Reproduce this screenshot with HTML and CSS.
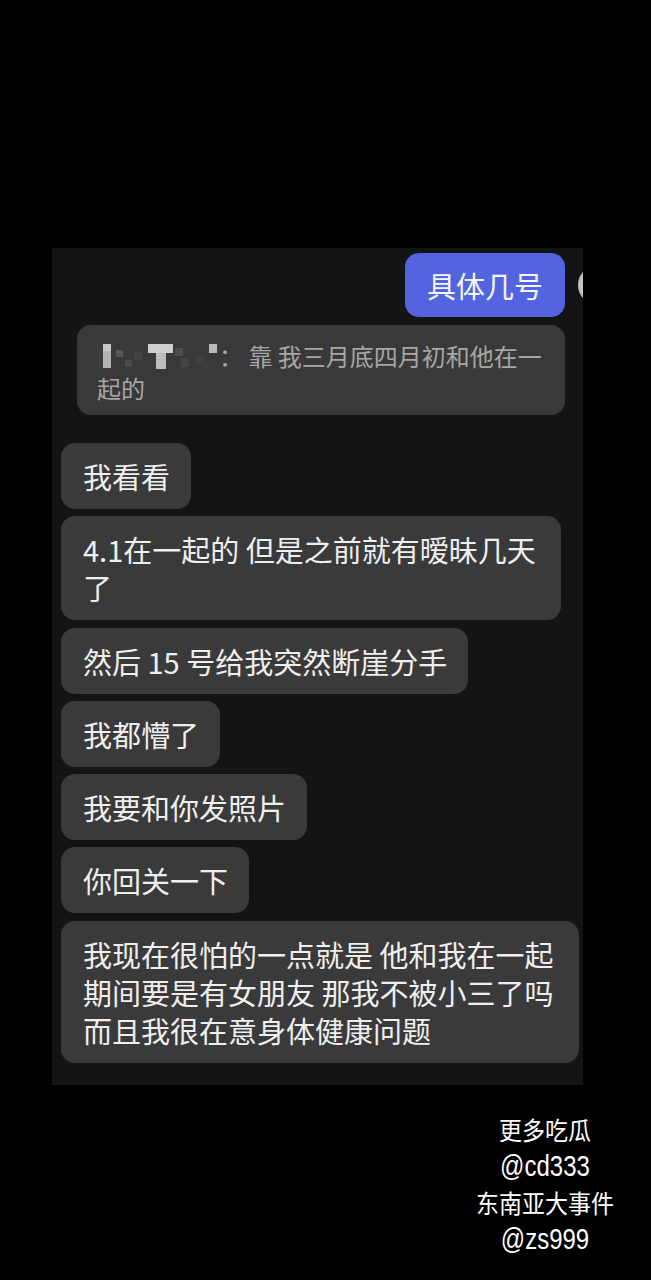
FILE: index.html
```html
<!DOCTYPE html>
<html lang="zh-CN">
<head>
  <meta charset="UTF-8" />
  <title>聊天记录</title>
  <link rel="stylesheet" href="styles.css">
</head>
<body>
  <div class="panel">
    <div class="out-row">
      <div class="bubble-out">具体几号</div>
      <div class="avatar"></div>
    </div>

    <div class="quote">
      <svg class="masked-name" width="122" height="30" viewBox="0 0 122 30">
        <rect x="0" y="4" width="5" height="22" fill="#3c3c3c" />
        <rect x="6" y="2" width="8" height="24" fill="#b4b4b4" />
        <rect x="6" y="2" width="8" height="7" fill="#c9c9c9" />
        <rect x="19" y="8" width="7" height="7" fill="#555" />
        <rect x="28" y="18" width="7" height="7" fill="#4a4a4a" />
        <rect x="37" y="10" width="8" height="8" fill="#444" />
        <rect x="51" y="2" width="25" height="9" fill="#cfcfcf" />
        <rect x="59" y="11" width="10" height="16" fill="#bdbdbd" />
        <rect x="78" y="6" width="8" height="8" fill="#4d4d4d" />
        <rect x="84" y="16" width="8" height="9" fill="#444" />
        <rect x="98" y="14" width="8" height="8" fill="#3f3f3f" />
        <rect x="112" y="2" width="8" height="9" fill="#b8b8b8" />
        <rect x="104" y="20" width="8" height="7" fill="#3d3d3d" />
      </svg><span class="colon">：</span> 靠 我三月底四月初和他在一<br>起的
    </div>

    <div class="msg-list">
      <div class="bubble">我看看</div>
      <div class="bubble bubble-two">4.1在一起的 但是之前就有暧昧几天<br>了</div>
      <div class="bubble">然后 15 号给我突然断崖分手</div>
      <div class="bubble">我都懵了</div>
      <div class="bubble">我要和你发照片</div>
      <div class="bubble">你回关一下</div>
      <div class="bubble bubble-three">我现在很怕的一点就是 他和我在一起<br>期间要是有女朋友 那我不被小三了吗<br>而且我很在意身体健康问题</div>
    </div>
  </div>

  <div class="watermark">
    <div class="wm-cn">更多吃瓜</div>
    <div class="wm-en">@cd333</div>
    <div class="wm-cn">东南亚大事件</div>
    <div class="wm-en">@zs999</div>
  </div>
</body>
</html>
```

FILE: styles.css
```css
body {
  margin: 0;
  background: #000;
  font-family: "Noto Sans CJK SC", "Noto Sans", sans-serif;
  width: 651px;
  height: 1280px;
  overflow: hidden;
}
.panel {
  box-sizing: border-box;
  width: 531px;
  margin: 248px 0 0 52px;
  padding: 5px 0 22px 9px;
  background: #141414;
  overflow: hidden;
}
.out-row {
  display: flex;
  justify-content: flex-end;
  align-items: center;
  gap: 13px;
  margin-right: -35px;
}
.bubble-out {
  background: #5264e0;
  color: #f4f5ff;
  font-size: 29px;
  line-height: 38px;
  padding: 13px 22px;
  border-radius: 14px;
}
.avatar {
  width: 40px;
  height: 40px;
  border-radius: 50%;
  background: radial-gradient(circle at 30% 50%, #d8d8d8, #8a8a8a);
  flex-shrink: 0;
}
.quote {
  box-sizing: border-box;
  width: 488px;
  margin: 8px 0 0 16px;
  padding: 15px 20px 11px 20px;
  background: #393939;
  border-radius: 14px;
  color: #a6a6a6;
  font-size: 24px;
  line-height: 32px;
}
.masked-name {
  vertical-align: -6px;
}
.msg-list {
  display: flex;
  flex-direction: column;
  align-items: flex-start;
  gap: 7.3px;
  margin-top: 28px;
}
.bubble {
  box-sizing: border-box;
  background: #3a3a3a;
  color: #efefef;
  font-size: 29px;
  line-height: 38px;
  padding: 14px 21px 14px 22px;
  border-radius: 14px;
}
.bubble-two {
  width: 500px;
}
.bubble-three {
  width: 518px;
}
.watermark {
  width: 200px;
  margin: 26px 0 0 445px;
  color: #fff;
  text-align: center;
}
.wm-cn {
  font-size: 25px;
  line-height: 37px;
  transform: scaleX(0.92);
}
.wm-en {
  font-family: "Liberation Sans", sans-serif;
  font-size: 30px;
  line-height: 36px;
  transform: scaleX(0.8);
}
```
